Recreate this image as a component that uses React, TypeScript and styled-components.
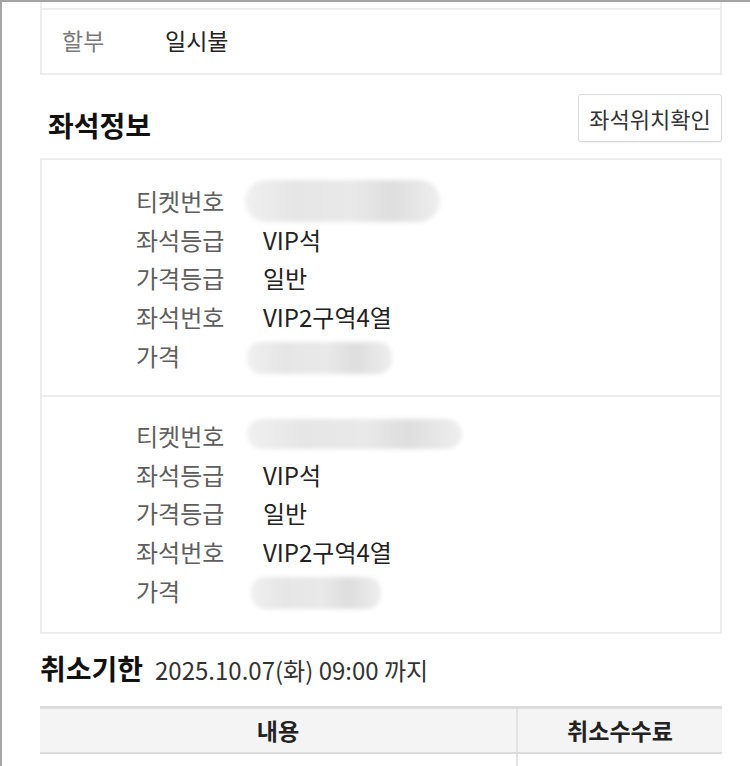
import React from "react";
import styled, { createGlobalStyle } from "styled-components";

const GlobalStyle = createGlobalStyle`
  html, body {
    margin: 0;
    padding: 0;
    background: #fff;
  }
  body {
    font-family: "Noto Sans CJK KR", "Noto Sans", sans-serif;
    color: #222;
  }
`;

type Field = { label: string; value?: string; masked?: "ticket" | "price" | "ticket2" | "price2" };

const tickets: Field[][] = [
  [
    { label: "티켓번호", masked: "ticket" },
    { label: "좌석등급", value: "VIP석" },
    { label: "가격등급", value: "일반" },
    { label: "좌석번호", value: "VIP2구역4열" },
    { label: "가격", masked: "price" },
  ],
  [
    { label: "티켓번호", masked: "ticket2" },
    { label: "좌석등급", value: "VIP석" },
    { label: "가격등급", value: "일반" },
    { label: "좌석번호", value: "VIP2구역4열" },
    { label: "가격", masked: "price2" },
  ],
];

const App: React.FC = () => {
  return (
    <React.Fragment>
      <GlobalStyle />
      <Frame>
        <Content>
          <Card>
            <PrevRow />
            <PayRow>
              <PayLabel>할부</PayLabel>
              <PayValue>일시불</PayValue>
            </PayRow>
          </Card>

          <SectionHead>
            <SectionTitle>좌석정보</SectionTitle>
            <SeatButton type="button">좌석위치확인</SeatButton>
          </SectionHead>

          <Card>
            {tickets.map((rows, i) => (
              <TicketBlock key={i}>
                {rows.map((r) => (
                  <TicketRow key={r.label}>
                    <TicketLabel>{r.label}</TicketLabel>
                    <TicketValue>
                      {r.value}
                      {r.masked && <Mask $kind={r.masked} />}
                    </TicketValue>
                  </TicketRow>
                ))}
              </TicketBlock>
            ))}
          </Card>

          <DeadlineRow>
            <DeadlineTitle>취소기한</DeadlineTitle>
            <DeadlineDate>2025.10.07(화) 09:00 까지</DeadlineDate>
          </DeadlineRow>

          <FeeTable>
            <thead>
              <tr>
                <HeadCell>내용</HeadCell>
                <HeadCell $narrow>취소수수료</HeadCell>
              </tr>
            </thead>
            <tbody>
              <tr>
                <BodyCell>2025.09.29 ~ 2025.10.06</BodyCell>
                <BodyCell $red>티켓금액의 10%</BodyCell>
              </tr>
            </tbody>
          </FeeTable>
        </Content>
      </Frame>
    </React.Fragment>
  );
};

const Frame = styled.div`
  width: 750px;
  height: 766px;
  overflow: hidden;
  box-sizing: border-box;
  border-top: 2px solid #a4a4a4;
  border-left: 2px solid #a4a4a4;
`;
const Content = styled.div`
  padding: 0 28px 0 38px;
`;
const Card = styled.div`
  border: 2px solid #ececec;
  border-top: 0;
  background: #fff;
`;
const PrevRow = styled.div`
  height: 6px;
  border-bottom: 2px solid #ececec;
`;
const PayRow = styled.div`
  height: 63px;
  display: flex;
  align-items: center;
  padding: 0 0 4px 20px;
  box-sizing: border-box;
  font-size: 23px;
`;
const PayLabel = styled.span`
  width: 103px;
  color: #7a7a7a;
`;
const PayValue = styled.span`
  color: #222;
`;
const SectionHead = styled.div`
  display: flex;
  justify-content: space-between;
  align-items: flex-start;
  padding: 19px 0 16px 8px;
  border-bottom: 2px solid #ececec;
`;
const SectionTitle = styled.h2`
  margin: 15px 0 0;
  font-size: 28px;
  font-weight: 700;
  color: #111;
  line-height: 32px;
`;
const SeatButton = styled.button`
  width: 144px;
  height: 48px;
  background: #fff;
  border: 1.5px solid #d9d9d9;
  border-radius: 3px;
  font-family: inherit;
  font-size: 22px;
  color: #333;
  padding: 0;
  box-shadow: 0 1px 1px rgba(0, 0, 0, 0.05);
`;
const TicketBlock = styled.div`
  padding: 21px 0 20px 94px;
  & + & {
    border-top: 2px solid #ececec;
    padding-top: 19px;
    padding-bottom: 22px;
  }
`;
const TicketRow = styled.div`
  display: flex;
  align-items: center;
  height: 38.8px;
  font-size: 24px;
`;
const TicketLabel = styled.span`
  width: 127px;
  color: #5e5e5e;
`;
const TicketValue = styled.span`
  position: relative;
  color: #222;
`;

const maskShapes = {
  ticket: { left: -18, top: -20, width: 195, height: 42, r: 22 },
  ticket2: { left: -16, top: -16, width: 215, height: 30, r: 16 },
  price: { left: -16, top: -14, width: 145, height: 32, r: 14 },
  price2: { left: -12, top: -14, width: 130, height: 32, r: 14 },
};

const Mask = styled.span<{ $kind: keyof typeof maskShapes }>`
  position: absolute;
  left: ${(p) => maskShapes[p.$kind].left}px;
  top: ${(p) => maskShapes[p.$kind].top}px;
  width: ${(p) => maskShapes[p.$kind].width}px;
  height: ${(p) => maskShapes[p.$kind].height}px;
  border-radius: ${(p) => maskShapes[p.$kind].r}px;
  background: linear-gradient(
    90deg,
    #f0f0f0 0%,
    #e6e6e6 25%,
    #e9e9e9 55%,
    #dedede 75%,
    #eeeeee 100%
  );
  filter: blur(2px);
`;

const DeadlineRow = styled.div`
  display: flex;
  align-items: baseline;
  gap: 12px;
  padding: 14px 0 0 0;
  height: 55px;
  box-sizing: border-box;
`;
const DeadlineTitle = styled.span`
  font-size: 28px;
  font-weight: 700;
  color: #111;
`;
const DeadlineDate = styled.span`
  font-size: 24px;
  color: #333;
`;
const FeeTable = styled.table`
  width: 682px;
  margin-top: 17px;
  border-collapse: collapse;
  border-top: 3px solid #dcdcdc;
`;
const HeadCell = styled.th<{ $narrow?: boolean }>`
  width: ${(p) => (p.$narrow ? "204px" : "auto")};
  height: 43px;
  padding: 0;
  background: #f4f4f4;
  font-size: 23px;
  font-weight: 700;
  color: #222;
  border-bottom: 2px solid #dcdcdc;
  & + & {
    border-left: 2px solid #e2e2e2;
  }
`;
const BodyCell = styled.td<{ $red?: boolean }>`
  height: 40px;
  text-align: center;
  font-size: 22px;
  color: ${(p) => (p.$red ? "#e0322e" : "#333")};
  padding-top: 6px;
  vertical-align: top;
  & + & {
    border-left: 2px solid #e2e2e2;
  }
`;

export default App;
